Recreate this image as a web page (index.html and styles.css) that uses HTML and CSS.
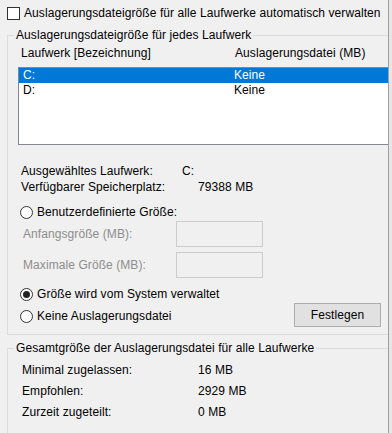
FILE: index.html
```html
<!DOCTYPE html>
<html>

<head>
  <title>Virtueller Arbeitsspeicher</title>
  <link rel="stylesheet" href="styles.css">
</head>

<body>
  <div class="window">
    <div class="page">
      <div class="auto-row">
        <span class="checkbox"></span>
        <span>Auslagerungsdateigröße für alle Laufwerke automatisch verwalten</span>
      </div>

      <fieldset class="group drives">
        <legend>Auslagerungsdateigröße für jedes Laufwerk</legend>

        <div class="list-head">
          <span>Laufwerk [Bezeichnung]</span>
          <span>Auslagerungsdatei (MB)</span>
        </div>
        <div class="list">
          <div class="list-row selected">
            <span>C:</span>
            <span>Keine</span>
          </div>
          <div class="list-row">
            <span>D:</span>
            <span>Keine</span>
          </div>
        </div>

        <div class="info">
          <div class="info-row">
            <span class="info-label short">Ausgewähltes Laufwerk:</span>
            <span>C:</span>
          </div>
          <div class="info-row">
            <span class="info-label">Verfügbarer Speicherplatz:</span>
            <span>79388 MB</span>
          </div>
        </div>

        <label class="radio-row custom">
          <span class="radio"></span>
          <span>Benutzerdefinierte Größe:</span>
        </label>
        <div class="size-row first">
          <span class="size-label">Anfangsgröße (MB):</span>
          <span class="textbox"></span>
        </div>
        <div class="size-row">
          <span class="size-label">Maximale Größe (MB):</span>
          <span class="textbox"></span>
        </div>

        <label class="radio-row system">
          <span class="radio checked"></span>
          <span>Größe wird vom System verwaltet</span>
        </label>
        <div class="last-row">
          <label class="radio-row none">
            <span class="radio"></span>
            <span>Keine Auslagerungsdatei</span>
          </label>
          <button>Festlegen</button>
        </div>
      </fieldset>

      <fieldset class="group totals">
        <legend>Gesamtgröße der Auslagerungsdatei für alle Laufwerke</legend>
        <div class="total-row">
          <span class="total-label">Minimal zugelassen:</span>
          <span>16 MB</span>
        </div>
        <div class="total-row">
          <span class="total-label">Empfohlen:</span>
          <span>2929 MB</span>
        </div>
        <div class="total-row">
          <span class="total-label">Zurzeit zugeteilt:</span>
          <span>0 MB</span>
        </div>
      </fieldset>
    </div>
    <div class="edge"></div>
    <div class="rest"></div>
  </div>
</body>

</html>
```

FILE: styles.css
```css
body {
  margin: 0;
  background-color: #f0f0f0;
  font-family: "Liberation Sans", Arial, sans-serif;
  font-size: 12px;
  line-height: 15px;
  letter-spacing: 0.08px;
  color: #000;
}

.window {
  display: flex;
  width: 392px;
  height: 433px;
  overflow: hidden;
}

.page {
  width: 388px;
  flex: none;
  overflow: hidden;
}

.edge {
  width: 1px;
  background-color: #a0a0a0;
}

.rest {
  flex: 1;
  background-color: #e6e6e6;
}

/* checkbox row */

.auto-row {
  display: flex;
  align-items: center;
  gap: 4px;
  height: 15px;
  margin-top: 6px;
  padding-left: 7px;
}

.checkbox {
  width: 13px;
  height: 13px;
  box-sizing: border-box;
  border: 1px solid #333;
  background-color: #fff;
}

/* group boxes */

.group {
  box-sizing: border-box;
  width: 386px;
  margin: 0 0 0 7px;
  padding: 0 0 0 10px;
  border: 1px solid #dcdcdc;
}

.group legend {
  margin-left: -4px;
  padding: 0 2px;
}

.drives {
  margin-top: 7px;
  padding-bottom: 7px;
}

.totals {
  margin-top: 6px;
  padding-top: 4px;
  padding-bottom: 10px;
}

/* drive list */

.list-head {
  display: grid;
  grid-template-columns: 214px 1fr;
  margin-top: 3px;
  padding-left: 3px;
}

.list {
  height: 78px;
  box-sizing: border-box;
  margin-top: 6px;
  border: 1px solid #828790;
  background-color: #fff;
}

.list-row {
  display: grid;
  grid-template-columns: 211px 1fr;
  height: 15px;
  padding-left: 4px;
}

.list-row.selected {
  background-color: #0078d7;
  color: #fff;
}

/* selected drive info */

.info {
  margin-top: 18px;
  padding-left: 3px;
}

.info-row {
  display: flex;
  line-height: 16px;
}

.info-label {
  width: 177px;
}

.info-label.short {
  width: 161px;
}

/* radios */

.radio-row {
  display: flex;
  align-items: center;
  gap: 4px;
  height: 15px;
  padding-left: 2px;
}

.radio {
  position: relative;
  width: 13px;
  height: 13px;
  box-sizing: border-box;
  border: 1px solid #333;
  border-radius: 50%;
  background-color: #fff;
}

.radio.checked::after {
  content: "";
  position: absolute;
  left: 2px;
  top: 2px;
  width: 7px;
  height: 7px;
  border-radius: 50%;
  background-color: #222;
}

.custom {
  margin-top: 10px;
}

.system {
  margin-top: 9px;
}

/* disabled size fields */

.size-row {
  display: flex;
  align-items: center;
  height: 26px;
  margin-top: 5px;
  padding-left: 5px;
  color: #8d8d8d;
}

.size-row.first {
  margin-top: 1px;
}

.size-label {
  width: 153px;
}

.textbox {
  width: 87px;
  height: 26px;
  box-sizing: border-box;
  border: 1px solid #cccccc;
  background-color: #f0f0f0;
}

.last-row {
  display: flex;
  align-items: flex-start;
  justify-content: space-between;
  margin-top: 1px;
  padding-right: 11px;
}

.none {
  margin-top: 6px;
}

button {
  width: 87px;
  height: 24px;
  padding: 0;
  font-family: inherit;
  font-size: 12px;
  letter-spacing: inherit;
  color: #000;
  background-color: #e1e1e1;
  border: 1px solid #adadad;
}

/* totals */

.total-row {
  display: flex;
  line-height: 21px;
  padding-left: 4px;
}

.total-label {
  width: 176px;
}
```
